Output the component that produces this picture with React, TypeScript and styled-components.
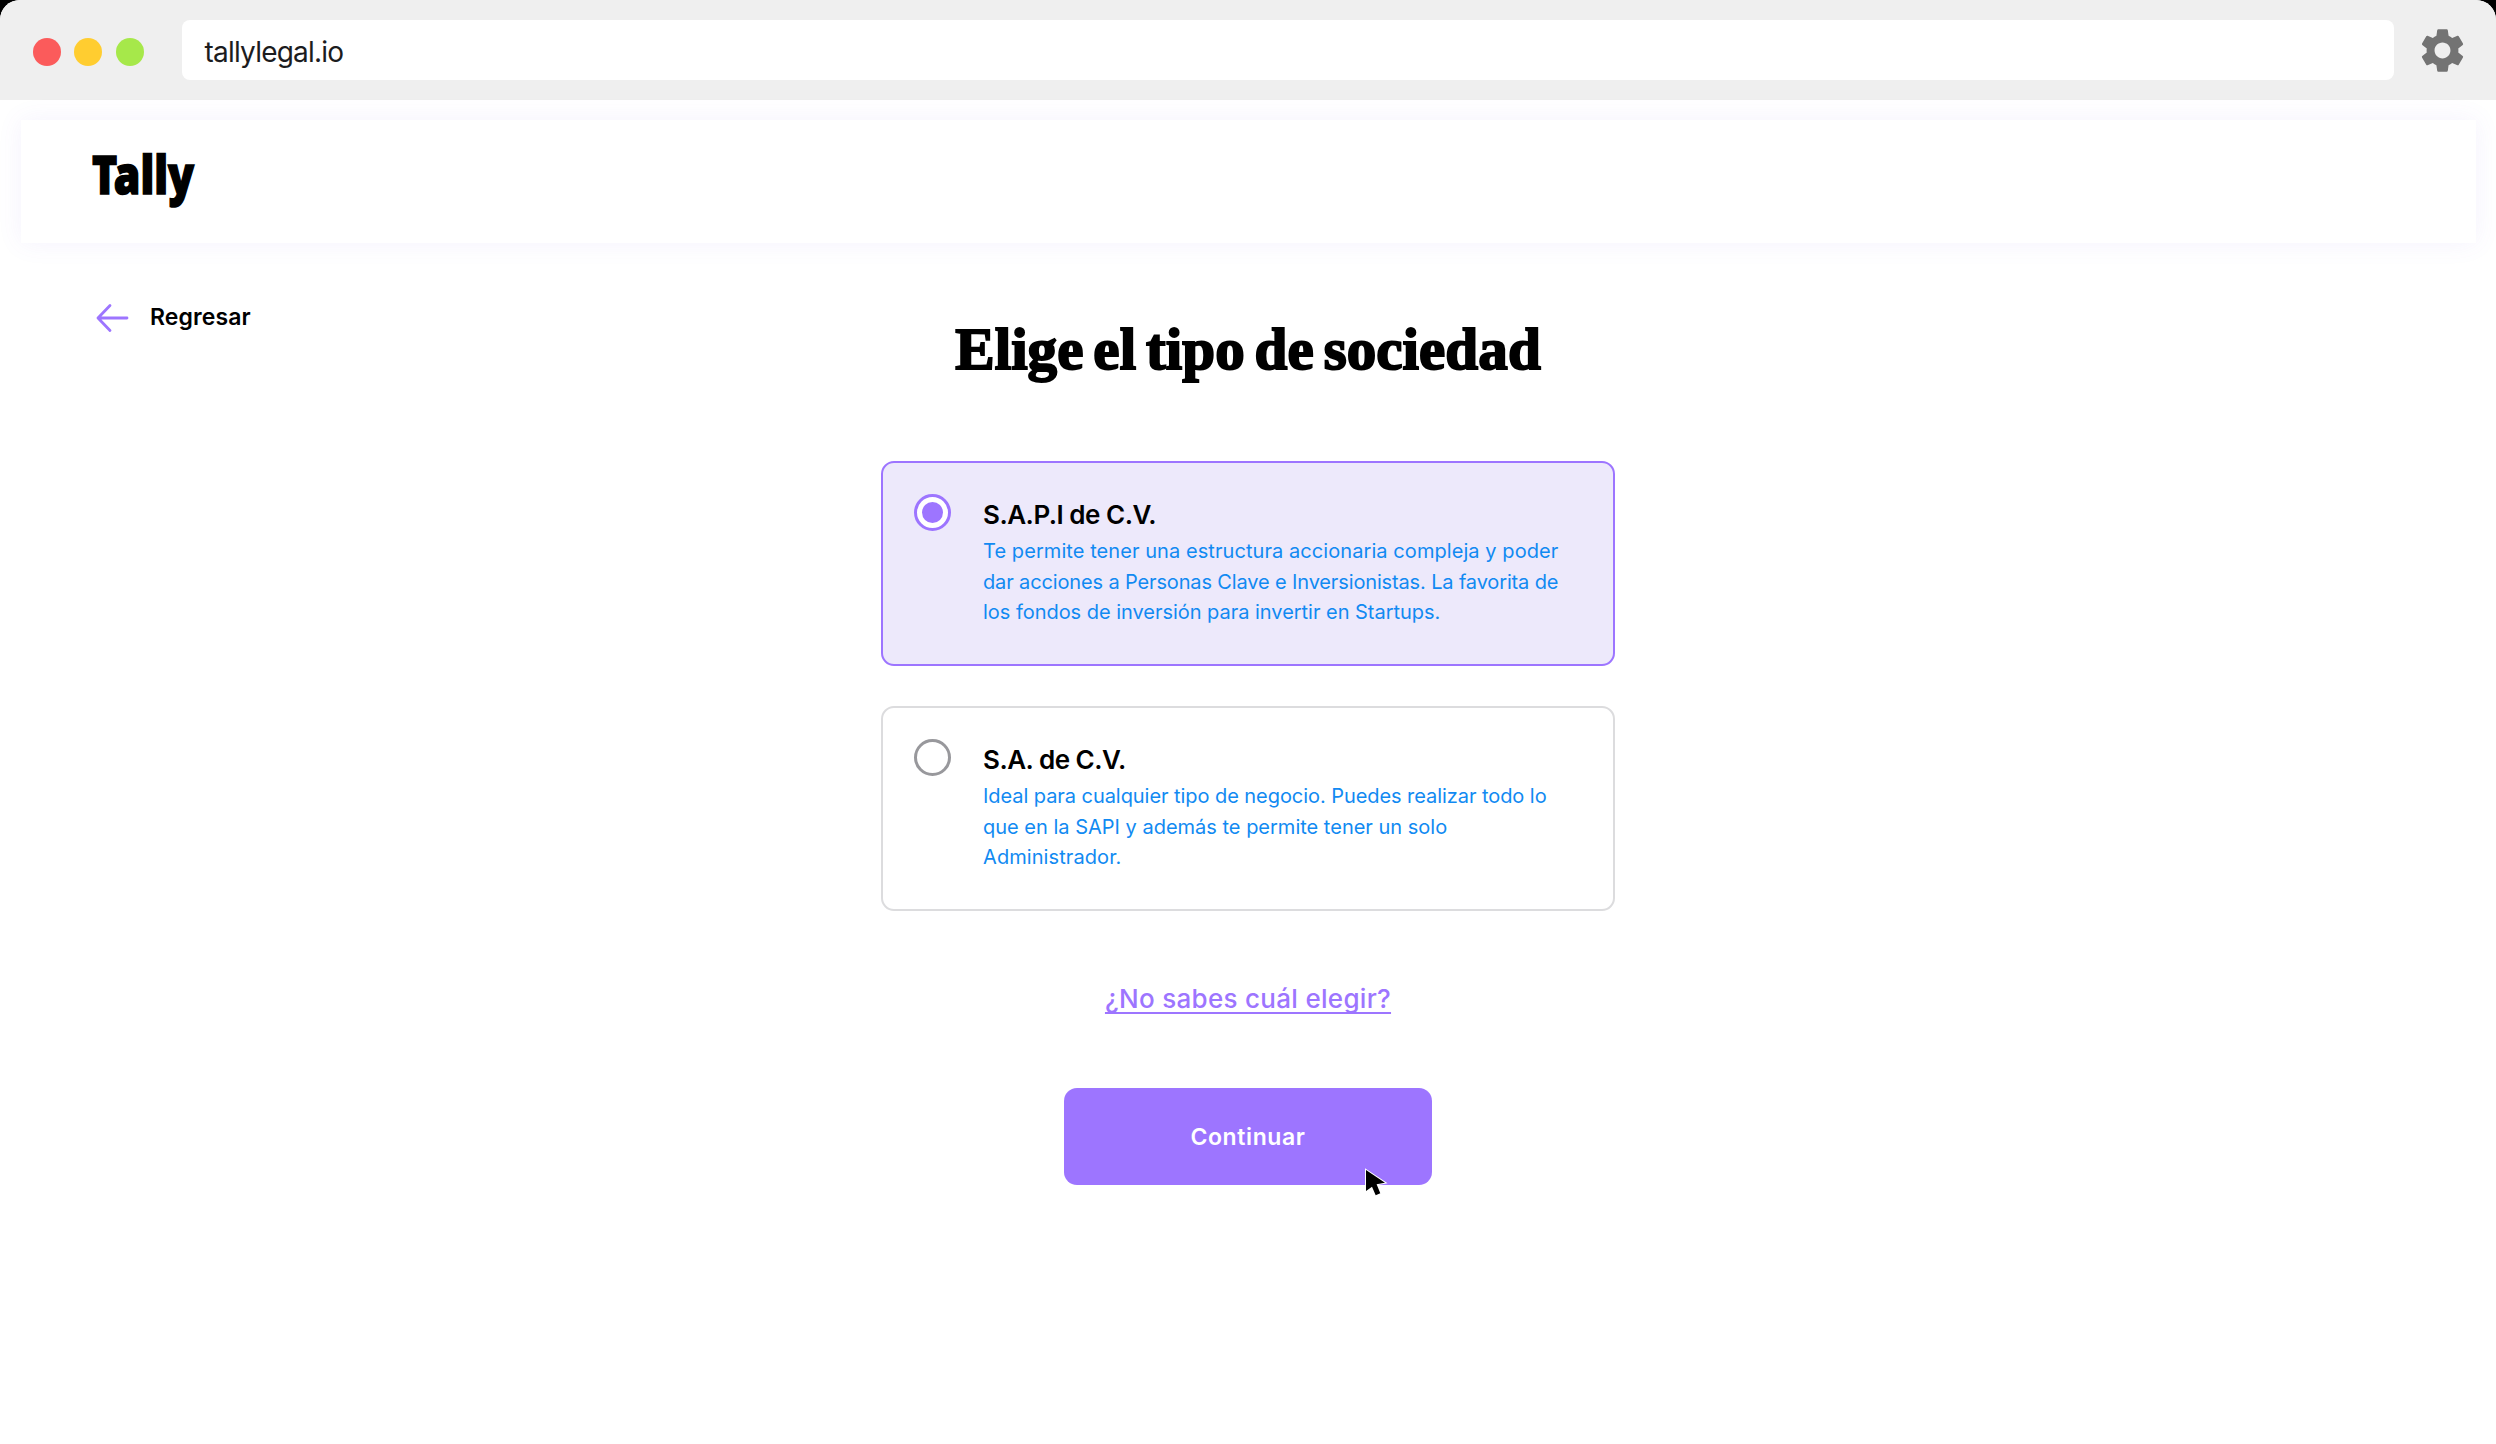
import { useState } from 'react';
import styled, { createGlobalStyle } from 'styled-components';
import { MdSettings } from 'react-icons/md';

const theme = {
  primary: '#9d75ff',
  primarySoft: '#ede9fb',
  link: '#118af2',
  chrome: '#efefef',
  border: '#dcdcde',
  gray: '#98989c',
};

const GlobalStyle = createGlobalStyle`
  * {
    box-sizing: border-box;
  }

  body {
    margin: 0;
    background: #000;
    font-family: Inter, "Liberation Sans", sans-serif;
    color: #000;
  }
`;

const Window = styled.div`
  min-height: 1444px;
  background: #fff;
  border-radius: 20px 20px 0 0;
  overflow: hidden;
`;

const Chrome = styled.div`
  display: flex;
  align-items: center;
  height: 100px;
  padding: 0 27px 0 33px;
  background: ${theme.chrome};
`;

const Dots = styled.div`
  display: flex;
  gap: 13.3px;
  margin: 3px 38px 0 0;
`;

const Dot = styled.span<{ color: string }>`
  width: 28px;
  height: 28px;
  border-radius: 50%;
  background: ${props => props.color};
`;

const AddressBar = styled.div`
  flex: 1;
  height: 60px;
  margin-right: 22px;
  padding: 3px 0 0 23px;
  border-radius: 8px;
  background: #fff;
  color: #1c1c1e;
  font-size: 28px;
  line-height: 58px;
  letter-spacing: -0.8px;
`;

const Gear = styled(MdSettings)`
  width: 53px;
  height: 53px;
  color: #737373;
`;

const Header = styled.header`
  display: flex;
  height: 123px;
  margin: 20px 20px 0 21px;
  padding: 14px 69px;
  background: #fff;
  box-shadow: 0 0 24px rgba(120, 90, 230, 0.08);
`;

const Logo = styled.svg`
  width: 110px;
  height: 90px;
  overflow: visible;
  font-family: "Noto Sans", sans-serif;
  font-size: 53px;
  font-weight: 900;
`;

const Main = styled.main`
  display: grid;
  grid-template-columns: 1fr 734px 1fr;
`;

const BackLink = styled.a`
  display: flex;
  align-items: center;
  gap: 21px;
  height: 32px;
  margin: 58px 0 0 96px;
  font-size: 23px;
  font-weight: 600;
  line-height: 32px;
  letter-spacing: 0.1px;
  justify-self: start;

  svg {
    width: 33px;
    height: 30px;
    margin-top: 1px;
    stroke: ${theme.primary};
    stroke-width: 2.8;
    stroke-linecap: round;
    stroke-linejoin: round;
    fill: none;
  }
`;

const Content = styled.section`
  display: flex;
  flex-direction: column;
  align-items: center;
  padding-top: 76px;
`;

const Title = styled.h1`
  margin: 0 0 82px;
  font-family: "Liberation Serif", serif;
  font-size: 59px;
  font-weight: 700;
  line-height: 60px;
  letter-spacing: 0.1px;
  word-spacing: -5px;
  white-space: nowrap;
  -webkit-text-stroke: 2px #000;
`;

const Options = styled.div`
  display: flex;
  flex-direction: column;
  gap: 40px;
  width: 100%;
`;

const OptionCard = styled.div<{ $selected: boolean }>`
  display: flex;
  gap: 32px;
  height: 205px;
  padding: 31px;
  border: 2px solid ${props => (props.$selected ? theme.primary : theme.border)};
  border-radius: 13px;
  background: ${props => (props.$selected ? theme.primarySoft : '#fff')};
  cursor: pointer;
`;

const Radio = styled.span<{ $selected: boolean }>`
  display: flex;
  align-items: center;
  justify-content: center;
  flex: none;
  width: 37px;
  height: 37px;
  border: 3px solid ${props => (props.$selected ? theme.primary : theme.gray)};
  border-radius: 50%;
  background: #fff;

  &::after {
    content: '';
    display: ${props => (props.$selected ? 'block' : 'none')};
    width: 21px;
    height: 21px;
    border-radius: 50%;
    background: ${theme.primary};
  }
`;

const OptionBody = styled.div`
  padding-top: 5px;
  white-space: nowrap;
`;

const OptionName = styled.div`
  font-size: 26px;
  font-weight: 600;
  line-height: 32px;
  letter-spacing: -0.5px;
`;

const OptionText = styled.div`
  margin-top: 5px;
  color: ${theme.link};
  font-size: 20px;
  line-height: 30.7px;
`;

const OptionLine = styled.div<{ $spacing: number }>`
  letter-spacing: ${props => props.$spacing}px;
`;

const HelpLink = styled.a`
  margin-top: 72px;
  color: ${theme.primary};
  font-size: 26px;
  font-weight: 500;
  line-height: 32px;
  letter-spacing: 0.3px;
  text-decoration: underline;
  text-decoration-thickness: 1.5px;
  text-decoration-skip-ink: none;
  text-underline-offset: 3.5px;
`;

const ContinueButton = styled.button`
  position: relative;
  width: 368px;
  height: 97px;
  margin-top: 73px;
  border: none;
  border-radius: 13px;
  background: ${theme.primary};
  color: #fff;
  font: 600 23px Inter, "Liberation Sans", sans-serif;
  letter-spacing: 0.6px;
`;

const Pointer = styled.svg`
  position: absolute;
  left: 299px;
  top: 79px;
  width: 28px;
  height: 34px;
`;

interface Option {
  id: string;
  name: string;
  lines: { text: string; spacing: number }[];
}

const OPTIONS: Option[] = [
  {
    id: 'sapi',
    name: 'S.A.P.I de C.V.',
    lines: [
      { text: 'Te permite tener una estructura accionaria compleja y poder', spacing: 0.07 },
      { text: 'dar acciones a Personas Clave e Inversionistas. La favorita de', spacing: -0.14 },
      { text: 'los fondos de inversión para invertir en Startups.', spacing: -0.03 },
    ],
  },
  {
    id: 'sa',
    name: 'S.A. de C.V.',
    lines: [
      { text: 'Ideal para cualquier tipo de negocio. Puedes realizar todo lo', spacing: -0.06 },
      { text: 'que en la SAPI y además te permite tener un solo', spacing: 0 },
      { text: 'Administrador.', spacing: 0.08 },
    ],
  },
];

export default function App() {
  const [selected, setSelected] = useState('sapi');

  return (
    <>
      <GlobalStyle />
      <Window>
        <Chrome>
          <Dots>
            <Dot color="#fb5b5b" />
            <Dot color="#ffcd30" />
            <Dot color="#a6e84a" />
          </Dots>
          <AddressBar>tallylegal.io</AddressBar>
          <Gear />
        </Chrome>

        <Header>
          <Logo viewBox="0 0 110 90">
            <text x="2" y="60" textLength="102" lengthAdjust="spacingAndGlyphs" stroke="#000" strokeWidth="1.6">
              Tally
            </text>
          </Logo>
        </Header>

        <Main>
          <BackLink>
            <svg viewBox="0 0 33 30">
              <path d="M31 15H2M14 2.5L2 15l12 12.5" />
            </svg>
            Regresar
          </BackLink>

          <Content>
            <Title>Elige el tipo de sociedad</Title>

            <Options>
              {OPTIONS.map(option => (
                <OptionCard
                  key={option.id}
                  $selected={option.id === selected}
                  onClick={() => setSelected(option.id)}
                >
                  <Radio $selected={option.id === selected} />
                  <OptionBody>
                    <OptionName>{option.name}</OptionName>
                    <OptionText>
                      {option.lines.map(line => (
                        <OptionLine key={line.text} $spacing={line.spacing}>{line.text}</OptionLine>
                      ))}
                    </OptionText>
                  </OptionBody>
                </OptionCard>
              ))}
            </Options>

            <HelpLink>¿No sabes cuál elegir?</HelpLink>

            <ContinueButton>
              Continuar
              <Pointer viewBox="-3 -3 28 34">
                <path
                  d="M0 0L19 12.7L10.6 14.3L14.3 23.3L9.7 25.3L6 16.7L0 21Z"
                  fill="#000"
                  stroke="#fff"
                  strokeWidth="2"
                  paintOrder="stroke"
                />
              </Pointer>
            </ContinueButton>
          </Content>
        </Main>
      </Window>
    </>
  );
}
